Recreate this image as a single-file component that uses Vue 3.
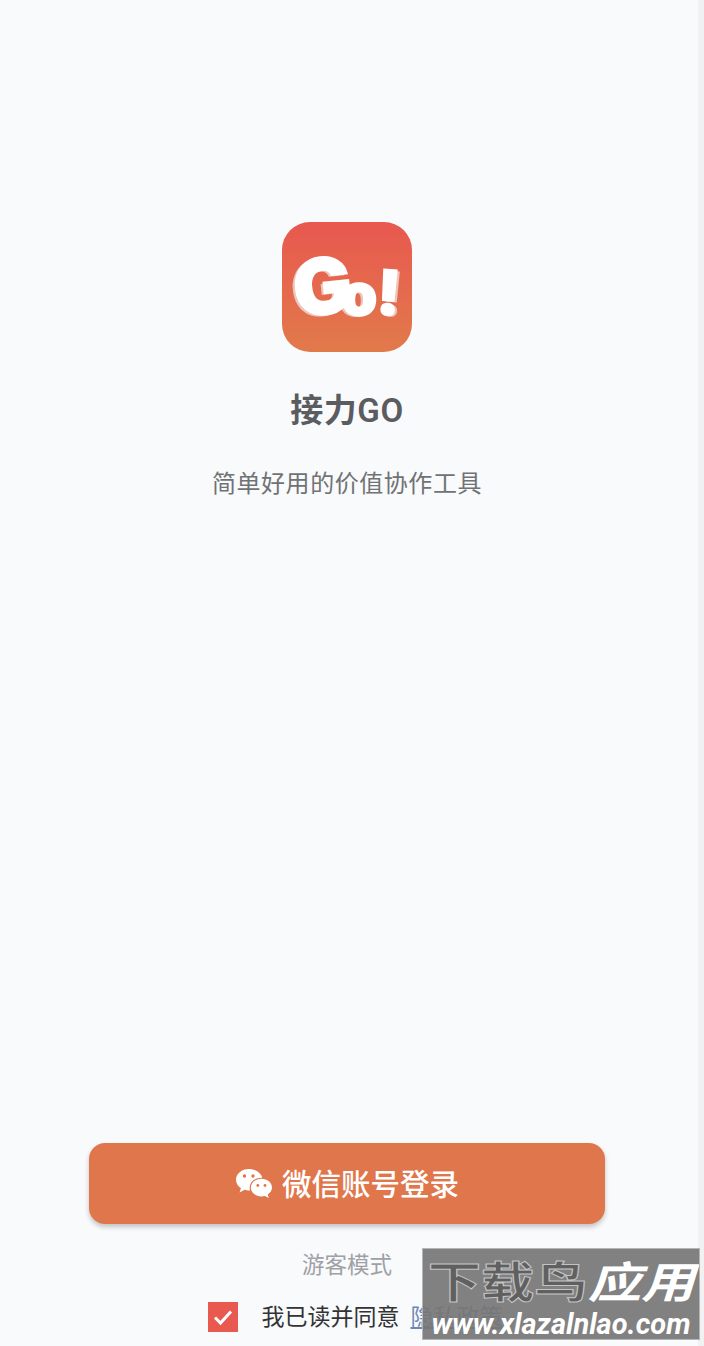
<script setup>
const title = "接力GO";
const slogan = "简单好用的价值协作工具";
</script>

<template>
  <div class="page">
    <main class="login">
      <div class="logo">
        <span class="logo-text"><span class="logo-g">G</span><span class="logo-o">o</span><span class="logo-bang">!</span></span>
      </div>
      <h1 class="title">{{ title }}</h1>
      <p class="slogan">{{ slogan }}</p>

      <div class="spacer"></div>

      <button class="wx-btn">
        <svg class="wx-icon" viewBox="0 0 38 32" aria-hidden="true">
          <path d="M14 1C6.8 1 1 5.8 1 11.8c0 3.4 1.9 6.4 4.9 8.4L4.6 24.4l4.9-2.6c1.5.4 3 .7 4.5.7h1.1a9.6 9.6 0 0 1-.4-2.8c0-5.6 5.3-10 11.7-10h.9C25.900 4.800 20.500 1 14 1z" fill="#fff" />
          <path d="M37 19.600c0-4.900-4.800-8.800-10.600-8.800-5.900 0-10.600 3.900-10.600 8.800s4.700 8.800 10.600 8.800c1.200 0 2.400-.2 3.500-.5l3.900 2.200-1.100-3.500c2.600-1.700 4.300-4.200 4.300-7z" fill="#fff" />
          <circle cx="9.500" cy="8" r="1.700" fill="#e0774c" />
          <circle cx="18" cy="8" r="1.700" fill="#e0774c" />
          <circle cx="22.800" cy="17.500" r="1.400" fill="#e0774c" />
          <circle cx="30" cy="17.500" r="1.400" fill="#e0774c" />
        </svg>
        <span class="wx-label">微信账号登录</span>
      </button>

      <a class="guest">游客模式</a>

      <div class="agree">
        <span class="check">
          <svg viewBox="0 0 30 30" aria-hidden="true">
            <path d="M7 15.500l5.500 5.500L23 9.500" fill="none" stroke="#fff" stroke-width="3" />
          </svg>
        </span>
        <span class="agree-text">我已读并同意</span>
        <a class="policy">隐私政策</a>
      </div>

      <!-- 水印 -->
      <div class="watermark">
        <div class="wm-top"><span class="wm-dark">下载鸟</span><span class="wm-light">应用</span></div>
        <div class="wm-url">www.xlazalnlao.com</div>
      </div>
    </main>
    <div class="scrollbar"></div>
  </div>
</template>

<style>
html,
body {
  margin: 0;
  background: #f8fafc;
}
</style>

<style scoped>
.page {
  display: flex;
  height: 1346px;
  overflow: hidden;
  background: #f8fafc;
  font-family: Roboto, "Noto Sans CJK SC", sans-serif;
}

.login {
  position: relative;
  flex: 1;
  display: flex;
  flex-direction: column;
  align-items: center;
  padding: 222px 4px 0 0;
  box-sizing: border-box;
}

.scrollbar {
  width: 6px;
  background: #f1f1f2;
}

/* === LOGO === */
.logo {
  width: 130px;
  height: 130px;
  border-radius: 28px;
  background: linear-gradient(180deg, #e8584f 0%, #e17a4b 100%);
  display: flex;
  align-items: center;
  justify-content: center;
  filter: blur(0.5px);
}

.logo-text {
  display: flex;
  align-items: baseline;
  color: #fff;
  font-family: Inter, sans-serif;
  font-weight: 900;
  line-height: 1;
  -webkit-text-stroke: 1.5px #fff;
  text-shadow: -3px 1px 0 #eec4bd;
}

.logo-g {
  font-size: 78px;
  letter-spacing: -11px;
  transform: rotate(-6deg);
}

.logo-o {
  font-size: 58px;
  letter-spacing: -1px;
}

.logo-bang {
  font-size: 62px;
  margin-left: 1px;
  text-shadow: 3px 1px 0 #eec4bd;
  transform: rotate(4deg);
}

/* === TITRES === */
.title {
  margin: 38px 0 0;
  font-size: 33px;
  line-height: 42px;
  font-weight: 600;
  letter-spacing: 0.6px;
  color: #5b5c5f;
}

.slogan {
  margin: 34px 0 0;
  font-size: 24px;
  line-height: 36px;
  letter-spacing: 0.55px;
  color: #717274;
}

.spacer {
  flex: 1;
}

/* === BOUTON === */
.wx-btn {
  width: 516px;
  height: 81px;
  flex-shrink: 0;
  display: flex;
  align-items: center;
  justify-content: center;
  gap: 9px;
  border: none;
  border-radius: 16px;
  background: #e0774c;
  color: #fff;
  font-family: inherit;
  font-size: 29.500px;
  font-weight: 500;
  box-shadow: 0 3px 5px rgba(0, 0, 0, 0.22);
}

.wx-label {
  padding-bottom: 4px;
}

.wx-icon {
  width: 38px;
  height: 32px;
}

.guest {
  margin-top: 24px;
  font-size: 22.500px;
  line-height: 34px;
  color: #9fa1a5;
}

.agree {
  margin: 20px 0 14px;
  height: 30px;
  display: flex;
  align-items: center;
  color: #333;
  font-size: 23px;
  transform: translateX(8px);
}

.check {
  width: 30px;
  height: 30px;
  background: #e8594f;
  margin-right: 24px;
}

.check svg {
  display: block;
}

.agree-text,
.policy {
  padding-bottom: 4px;
}

.policy {
  margin-left: 11px;
  color: #6d86b5;
  text-decoration: underline;
}

/* === WATERMARK === */
.watermark {
  position: absolute;
  left: 422px;
  top: 1248px;
  width: 278px;
  height: 92px;
  box-sizing: border-box;
  padding-top: 9px;
  background: rgba(118, 118, 118, 0.92);
  border: 1px solid #b5b5b5;
  font-weight: 700;
  text-align: center;
  overflow: hidden;
}

.wm-top {
  height: 51px;
  font-size: 43px;
  line-height: 51px;
  white-space: nowrap;
  transform: scaleX(1.240);
}

.wm-dark {
  color: #606060;
  -webkit-text-stroke: 1px #c4c4c4;
}

.wm-light {
  color: #fff;
  font-style: italic;
}

.wm-url {
  font-size: 29px;
  font-style: italic;
  line-height: 30px;
  color: #fff;
  white-space: nowrap;
}
</style>
